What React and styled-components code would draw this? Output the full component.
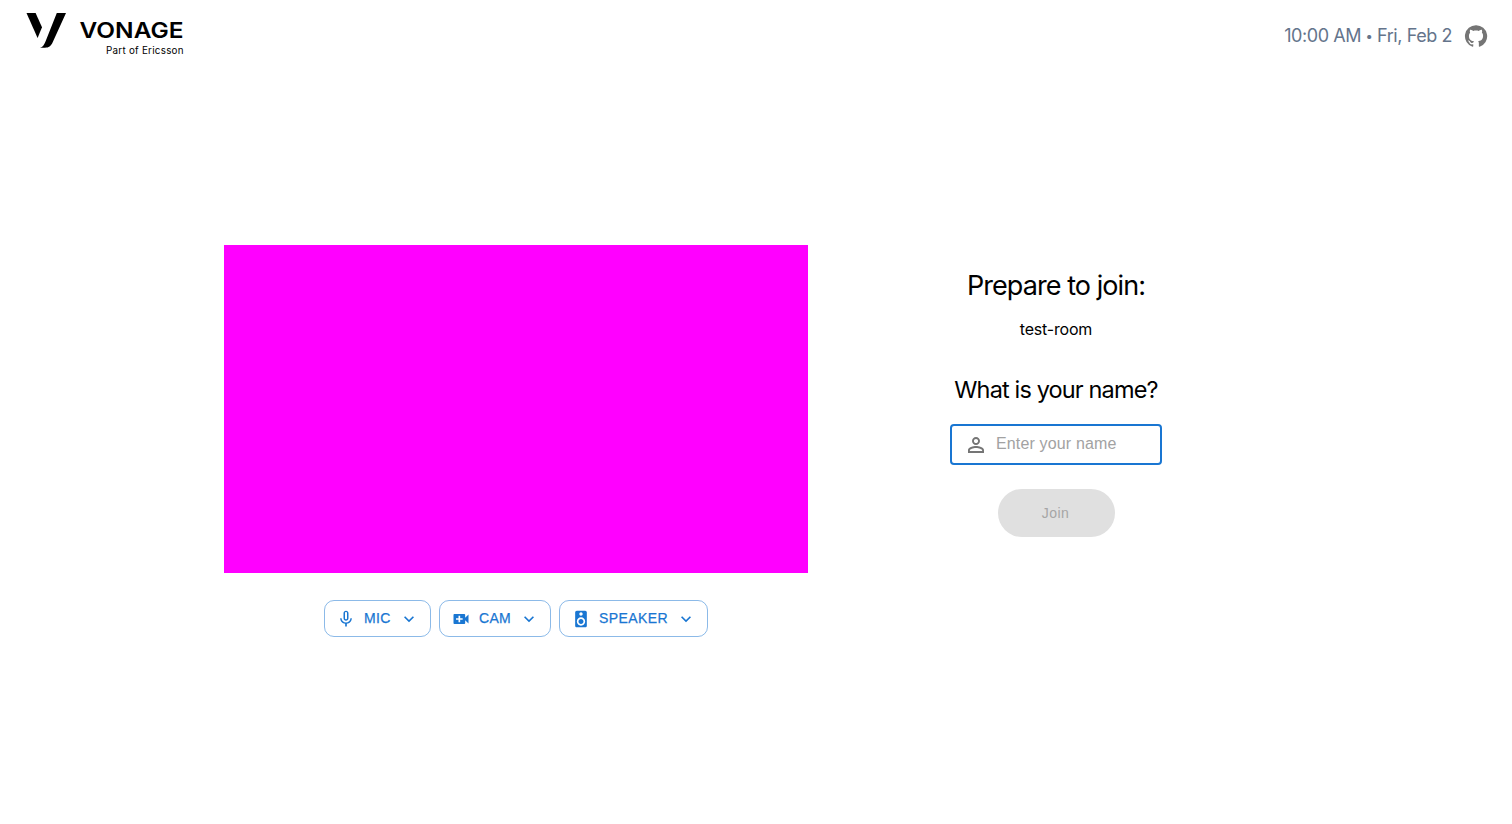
import React from "react";
import styled, { createGlobalStyle } from "styled-components";

const GlobalStyle = createGlobalStyle`
  * { box-sizing: border-box; }
  body {
    margin: 0;
    background: #fff;
    color: #000;
    font-family: Inter, "Liberation Sans", sans-serif;
  }
`;

const Page = styled.div`
  display: flex;
  flex-direction: column;
  height: 824px;
  overflow: hidden;
`;

const Header = styled.header`
  display: flex;
  align-items: center;
  justify-content: space-between;
  height: 72px;
  padding: 0 24px;
`;

const Logo = styled.svg`
  display: block;
  width: 168px;
  height: 72px;
`;

const HeaderInfo = styled.div`
  display: flex;
  align-items: center;
  gap: 12px;
`;

const DateTime = styled.div`
  display: flex;
  color: #64748b;
  font-size: 18px;
  line-height: 28px;
  letter-spacing: -0.43px;
  white-space: nowrap;
`;

const Dot = styled.span`
  width: 16px;
  font-size: 13px;
  text-align: center;
  letter-spacing: 0;
`;

const Icon = styled.svg`
  display: block;
  flex: none;
  width: ${(p) => p.$size}px;
  height: ${(p) => p.$size}px;
  fill: ${(p) => p.$color || "currentColor"};
`;

const Main = styled.main`
  display: flex;
  padding: 173px 0 0 224px;
`;

const PreviewColumn = styled.section`
  display: flex;
  flex-direction: column;
  align-items: center;
  width: 584px;
`;

const VideoPreview = styled.div`
  width: 100%;
  height: 328px;
  background: #f0f;
`;

const DeviceRow = styled.div`
  display: flex;
  gap: 8px;
  margin-top: 27px;
`;

const DeviceButton = styled.button`
  display: flex;
  align-items: center;
  width: ${(p) => p.$width}px;
  height: 37px;
  padding: 0 11px;
  border: 1px solid rgba(25, 118, 210, 0.5);
  border-radius: 10px;
  background: transparent;
  color: #1976d2;
`;

const DeviceLabel = styled.span`
  flex: 1;
  margin-left: 8px;
  padding-bottom: 1px;
  text-align: left;
  white-space: nowrap;
  font: 500 14px/20px "Liberation Sans", sans-serif;
  letter-spacing: ${(p) => p.$spacing}px;
  -webkit-text-stroke: 0.25px currentColor;
`;

const JoinForm = styled.form`
  display: flex;
  flex-direction: column;
  align-items: center;
  width: 212px;
  margin-left: 142px;
  padding-top: 23px;
`;

const Title = styled.h1`
  margin: 0;
  font-size: 27px;
  font-weight: 400;
  line-height: 36px;
  letter-spacing: -0.93px;
  white-space: nowrap;
`;

const RoomName = styled.p`
  margin: 13px 0 0;
  font-size: 16px;
  line-height: 24px;
  letter-spacing: -0.2px;
`;

const Question = styled.h2`
  margin: 33px 0 0;
  font-size: 23.5px;
  font-weight: 400;
  line-height: 32px;
  letter-spacing: -0.86px;
  white-space: nowrap;
`;

const NameField = styled.label`
  display: flex;
  align-items: center;
  gap: 8px;
  width: 212px;
  height: 41px;
  margin-top: 18px;
  padding: 0 12px;
  border: 2px solid #1976d2;
  border-radius: 4px;
`;

const NameInput = styled.input`
  flex: 1;
  min-width: 0;
  height: 24px;
  padding: 0 0 2px;
  border: 0;
  outline: 0;
  background: transparent;
  font: 400 16px/22px "Liberation Sans", sans-serif;
  letter-spacing: 0.15px;
  &::placeholder { color: #a2a2a2; opacity: 1; }
`;

const JoinButton = styled.button`
  width: 117px;
  height: 48px;
  margin: 24px 0 0 1px;
  padding: 0 2px 0 0;
  border: 0;
  border-radius: 24px;
  background: #e0e0e0;
  color: #a6a6a6;
  font: 500 14px/24px "Liberation Sans", sans-serif;
  letter-spacing: 0.4px;
`;

const paths = {
  github:
    "M12 1.27a11 11 0 00-3.48 21.46c.55.09.73-.28.73-.55v-1.84c-3.03.64-3.67-1.46-3.67-1.46-.55-1.29-1.28-1.65-1.28-1.65-.92-.65.1-.65.1-.65 1.1 0 1.73 1.1 1.73 1.1.92 1.65 2.57 1.2 3.21.92a2 2 0 01.64-1.47c-2.47-.27-5.04-1.19-5.04-5.5 0-1.1.46-2.1 1.2-2.84a3.76 3.76 0 010-2.93s.91-.28 3.11 1.1c1.8-.49 3.7-.49 5.5 0 2.1-1.38 3.02-1.1 3.02-1.1a3.76 3.76 0 01.1 2.93c.83.74 1.2 1.74 1.2 2.94 0 4.21-2.57 5.13-5.04 5.4.45.37.82.92.82 2.02v3.03c0 .27.1.64.73.55A11 11 0 0012 1.27",
  mic:
    "M12 14c1.66 0 2.99-1.34 2.99-3L15 5c0-1.66-1.34-3-3-3S9 3.34 9 5v6c0 1.66 1.34 3 3 3zm-1.2-9.1c0-.66.54-1.2 1.2-1.2s1.2.54 1.2 1.2l-.01 6.2c0 .66-.53 1.2-1.19 1.2s-1.2-.54-1.2-1.2V4.9zm6.5 6.1c0 3-2.54 5.1-5.3 5.1S6.7 14 6.7 11H5c0 3.41 2.72 6.23 6 6.72V21h2v-3.28c3.28-.48 6-3.3 6-6.72h-1.7z",
  cam:
    "M17 10.5V7c0-.55-.45-1-1-1H4c-.55 0-1 .45-1 1v10c0 .55.45 1 1 1h12c.55 0 1-.45 1-1v-3.5l4 4v-11l-4 4zM14 13h-3v3H9v-3H6v-2h3V8h2v3h3v2z",
  speaker:
    "M17 2H7c-1.1 0-2 .9-2 2v16c0 1.1.9 1.99 2 1.99L17 22c1.1 0 2-.9 2-2V4c0-1.1-.9-2-2-2zm-5 2c1.1 0 2 .9 2 2s-.9 2-2 2c-1.11 0-2-.9-2-2s.89-2 2-2zm0 16c-2.76 0-5-2.24-5-5s2.24-5 5-5 5 2.24 5 5-2.24 5-5 5zm0-8c-1.66 0-3 1.34-3 3s1.34 3 3 3 3-1.34 3-3-1.34-3-3-3z",
  chevron: "M7.41 8.59 12 13.17l4.59-4.58L18 10l-6 6-6-6 1.41-1.41z",
  person:
    "M12 5.9c1.16 0 2.1.94 2.1 2.1s-.94 2.1-2.1 2.1S9.9 9.16 9.9 8s.94-2.1 2.1-2.1m0 9c2.97 0 6.1 1.46 6.1 2.1v1.1H5.9V17c0-.64 3.13-2.1 6.1-2.1M12 4C9.79 4 8 5.79 8 8s1.79 4 4 4 4-1.79 4-4-1.79-4-4-4zm0 9c-2.67 0-8 1.34-8 4v3h16v-3c0-2.66-5.33-4-8-4z",
};

const Glyph = ({ name, size, color }) => (
  <Icon viewBox="0 0 24 24" $size={size} $color={color} aria-hidden="true">
    <path d={paths[name]} />
  </Icon>
);

const devices = [
  { icon: "mic", label: "MIC", width: 107, spacing: 0.3 },
  { icon: "cam", label: "CAM", width: 112, spacing: 0.3 },
  { icon: "speaker", label: "SPEAKER", width: 149, spacing: 0.4 },
];

const VonageLogo = () => (
  <Logo viewBox="24 0 168 72" role="img" aria-label="Vonage, part of Ericsson">
    <path d="M26.5 13H35.6L42 27.3L37.6 38Z" />
    <path d="M56.8 13H66L52.7 42.3C50.8 46.4 48.8 47.7 45 47.7H40C43 47 44.2 44.4 45.6 41.2Z" />
    <text x="79.5" y="38" fontSize="22" fontWeight="600" textLength="104" lengthAdjust="spacingAndGlyphs">
      VONAGE
    </text>
    <text x="106" y="54.3" fontSize="9.8" textLength="77.5" lengthAdjust="spacing">
      Part of Ericsson
    </text>
  </Logo>
);

export default function App() {
  return (
    <Page>
      <GlobalStyle />
      <Header>
        <VonageLogo />
        <HeaderInfo>
          <DateTime>
            <span>10:00 AM</span>
            <Dot>•</Dot>
            <span>Fri, Feb 2</span>
          </DateTime>
          <Glyph name="github" size={24} color="#757575" />
        </HeaderInfo>
      </Header>
      <Main>
        <PreviewColumn>
          <VideoPreview />
          <DeviceRow>
            {devices.map((d) => (
              <DeviceButton key={d.label} type="button" $width={d.width}>
                <Glyph name={d.icon} size={20} />
                <DeviceLabel $spacing={d.spacing}>{d.label}</DeviceLabel>
                <Glyph name="chevron" size={20} />
              </DeviceButton>
            ))}
          </DeviceRow>
        </PreviewColumn>
        <JoinForm>
          <Title>Prepare to join:</Title>
          <RoomName>test-room</RoomName>
          <Question>What is your name?</Question>
          <NameField>
            <Glyph name="person" size={24} color="#757575" />
            <NameInput placeholder="Enter your name" />
          </NameField>
          <JoinButton type="button" disabled>
            Join
          </JoinButton>
        </JoinForm>
      </Main>
    </Page>
  );
}
